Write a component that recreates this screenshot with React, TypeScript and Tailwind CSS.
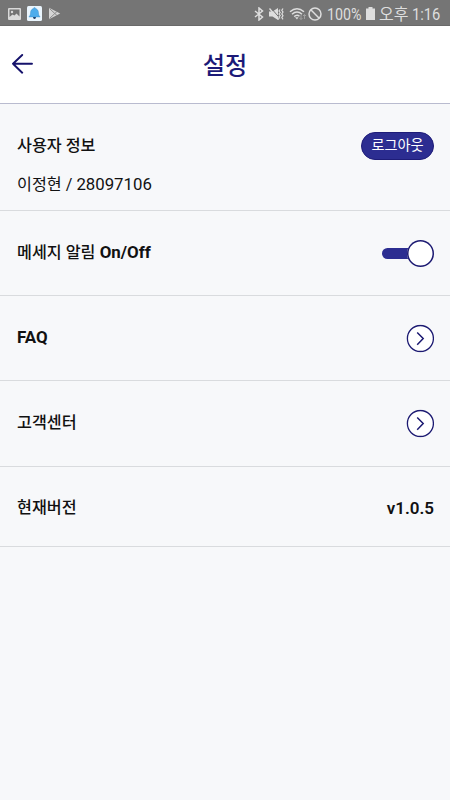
import React from "react";

const FONT = "font-['Roboto','Noto_Sans_CJK_KR',sans-serif]";

function StatusBar() {
  return (
    <div className="flex h-[26px] items-center justify-between border-b border-[#6a6a6a] bg-[#757575] pl-2 pr-[9px] text-[#dedede]">
      <div className="flex items-center pt-[2px]">
        <svg width="13" height="12" viewBox="0 0 13 12" className="block">
          <rect width="13" height="12" rx="1" fill="#d9d9d9" />
          <path d="M1.500 1.500h10v7L8.500 5.500 6.500 7.600 4.500 6.400 1.500 9z" fill="#727272" />
          <circle cx="4" cy="4" r="1.200" fill="#d9d9d9" />
        </svg>
        <svg width="15" height="15" viewBox="0 0 15 15" className="ml-[6px] block">
          <rect width="15" height="15" rx="1.500" fill="#eaf5fd" />
          <circle cx="7.500" cy="11.500" r="1.400" fill="#17345c" />
          <path d="M6.600 2.500a.9.9 0 0 1 1.800 0c2 .5 3 2 3.100 4.400 0 1.600.4 2.600 1.600 4.100H1.900c1.200-1.500 1.600-2.500 1.600-4.100C3.600 4.500 4.600 3 6.600 2.500z" fill="#4dacec" stroke="#3386c0" strokeWidth=".4" />
        </svg>
        <svg width="13" height="13" viewBox="0 0 13 13" className="ml-[6px] block">
          <path d="M1 .8 12.200 6.500 1 12.200z" fill="#d5d5d5" />
          <path d="M1.500 1.500 6.800 6.500 1.500 11.500M6.800 6.500 9 4.500M6.800 6.500 9 8.500" fill="none" stroke="#858585" strokeWidth=".9" />
        </svg>
      </div>
      <div className="flex items-center pt-[2px]">
        <svg width="10" height="14" viewBox="0 0 10 14" fill="none" stroke="currentColor" strokeWidth="1.500" className="block">
          <path d="M1 4l7.500 6L5 13V1l3.500 3L1 10" />
        </svg>
        <svg width="15" height="14" viewBox="0 0 15 14" className="ml-[5px] block">
          <path d="M0 4.500h3.500L9 1v12L3.500 9.500H0z" fill="currentColor" />
          <path d="M1.800.8 11 11.400" stroke="#757575" strokeWidth="1" />
          <path d="M.5 1.500 9.800 12.500" stroke="currentColor" strokeWidth="1.300" />
          <path d="M11 2.500l-1 1.500 1.200 1.500-1.200 1.500 1.200 1.500-1.200 1.500 1 1.500M14 1.500l-1.200 1.800 1.200 1.800-1.200 1.800 1.200 1.800-1.200 1.800 1.200 1.800" fill="none" stroke="currentColor" strokeWidth="1.200" />
        </svg>
        <svg width="18" height="14" viewBox="0 0 18 14" fill="none" stroke="currentColor" strokeWidth="1.500" className="ml-[5px] block">
          <path d="M1 4.700Q8 -1.300 15 4.700M3 7.200Q8 2.700 13 7.200M5.200 9.600Q8 7 10.500 9.300" />
          <path d="M6 10.300 8 12.600 9.500 10.300z" fill="currentColor" stroke="none" />
          <path d="M12 8v4.500m-1.500-1.500 1.500 1.500 1.500-1.500M15.500 12V7.500M14 9l1.500-1.500L17 9" stroke="#a0a0a0" strokeWidth="1" />
        </svg>
        <svg width="14" height="14" viewBox="0 0 14 14" fill="none" stroke="currentColor" strokeWidth="1.500" className="ml-px block">
          <circle cx="7" cy="7" r="6" />
          <path d="m2.800 2.800 8.400 8.400" />
        </svg>
        <span className="ml-[5px] w-[35px] origin-left translate-y-px scale-x-[.89] whitespace-nowrap text-[16px] leading-[20px]">100%</span>
        <svg width="9" height="13" viewBox="0 0 9 13" className="ml-[4px] block">
          <path d="M2.500 0h4v1.500H9V13H0V1.500h2.500z" fill="currentColor" />
        </svg>
        <span className="ml-[4px] flex w-[62px] whitespace-nowrap text-[16px] leading-[20px]">
          <span className="w-[34px] translate-y-px">오후</span>
          <span className="origin-left translate-x-[2px] translate-y-px scale-x-[.92]">1:16</span>
        </span>
      </div>
    </div>
  );
}

function Chevron() {
  return (
    <svg width="28" height="28" viewBox="0 0 28 28" fill="none" stroke="#1c1a72" className="block translate-y-[.5px]">
      <circle cx="14.400" cy="14" r="13" fill="#fff" strokeWidth="1.300" />
      <path d="m11.200 7.900 6 6.200-6 6.200" strokeWidth="1.500" />
    </svg>
  );
}

function Row({ label, latin, height, children }: { label?: string; latin?: string; height: string; children: React.ReactNode }) {
  return (
    <div className={`flex items-center justify-between border-b border-[#d9dbde] pl-[17px] pr-4 ${height}`}>
      <span className={`whitespace-pre text-[16.2px] font-medium leading-6 ${latin ? "mb-[2px]" : ""}`}>
        {label}
        {latin && <span className="text-[16.900px] font-bold">{latin}</span>}
      </span>
      {children}
    </div>
  );
}

export default function App() {
  return (
    <div className={`flex h-[800px] w-[450px] flex-col overflow-hidden bg-[#f7f8fa] text-[#111] ${FONT}`}>
      <StatusBar />
      <header className="grid h-[78px] grid-cols-[1fr_auto_1fr] items-center border-b border-[#b9bbcf] bg-white px-3">
        <svg width="22" height="20" viewBox="0 0 22 20" fill="none" stroke="#15126b" strokeWidth="1.900" strokeLinecap="round" strokeLinejoin="round" className="mb-px block">
          <path d="M20 9.700H1M10.200 1 1 9.700l9.200 9" />
        </svg>
        <h1 className="pt-[3px] text-[24.200px] font-medium leading-8 text-[#1c1a78]">설정</h1>
      </header>
      <section className="h-[107px] border-b border-[#d9dbde] pl-[17px] pr-4 pt-[28px]">
        <div className="flex h-7 items-center justify-between">
          <h2 className="text-[16.2px] font-medium leading-6">사용자 정보</h2>
          <button className="h-7 w-[73px] rounded-full border border-[#1e1c78] bg-[#2c2d91] pb-[2px] text-[14.200px] leading-none text-white">로그아웃</button>
        </div>
        <p className="mt-3 text-[16.200px] leading-6">이정현 / <span className="text-[16.800px]">28097106</span></p>
      </section>
      <Row label="메세지 알림" latin=" On/Off" height="h-[85px]">
        <div className="flex items-center">
          <div className="h-[11px] w-[29px] rounded-l-full bg-[#2c2d91]" />
          <div className="-ml-1 size-[27px] rounded-full bg-white shadow-[inset_0_0_0_1.5px_#1c1a72]" />
        </div>
      </Row>
      <Row latin="FAQ" height="h-[85px]"><Chevron /></Row>
      <Row label="고객센터" height="h-[86px] pb-px"><Chevron /></Row>
      <Row label="현재버전" height="h-[80px] pt-[2px]">
        <span className="text-[17px] font-semibold leading-6">v1.0.5</span>
      </Row>
    </div>
  );
}
